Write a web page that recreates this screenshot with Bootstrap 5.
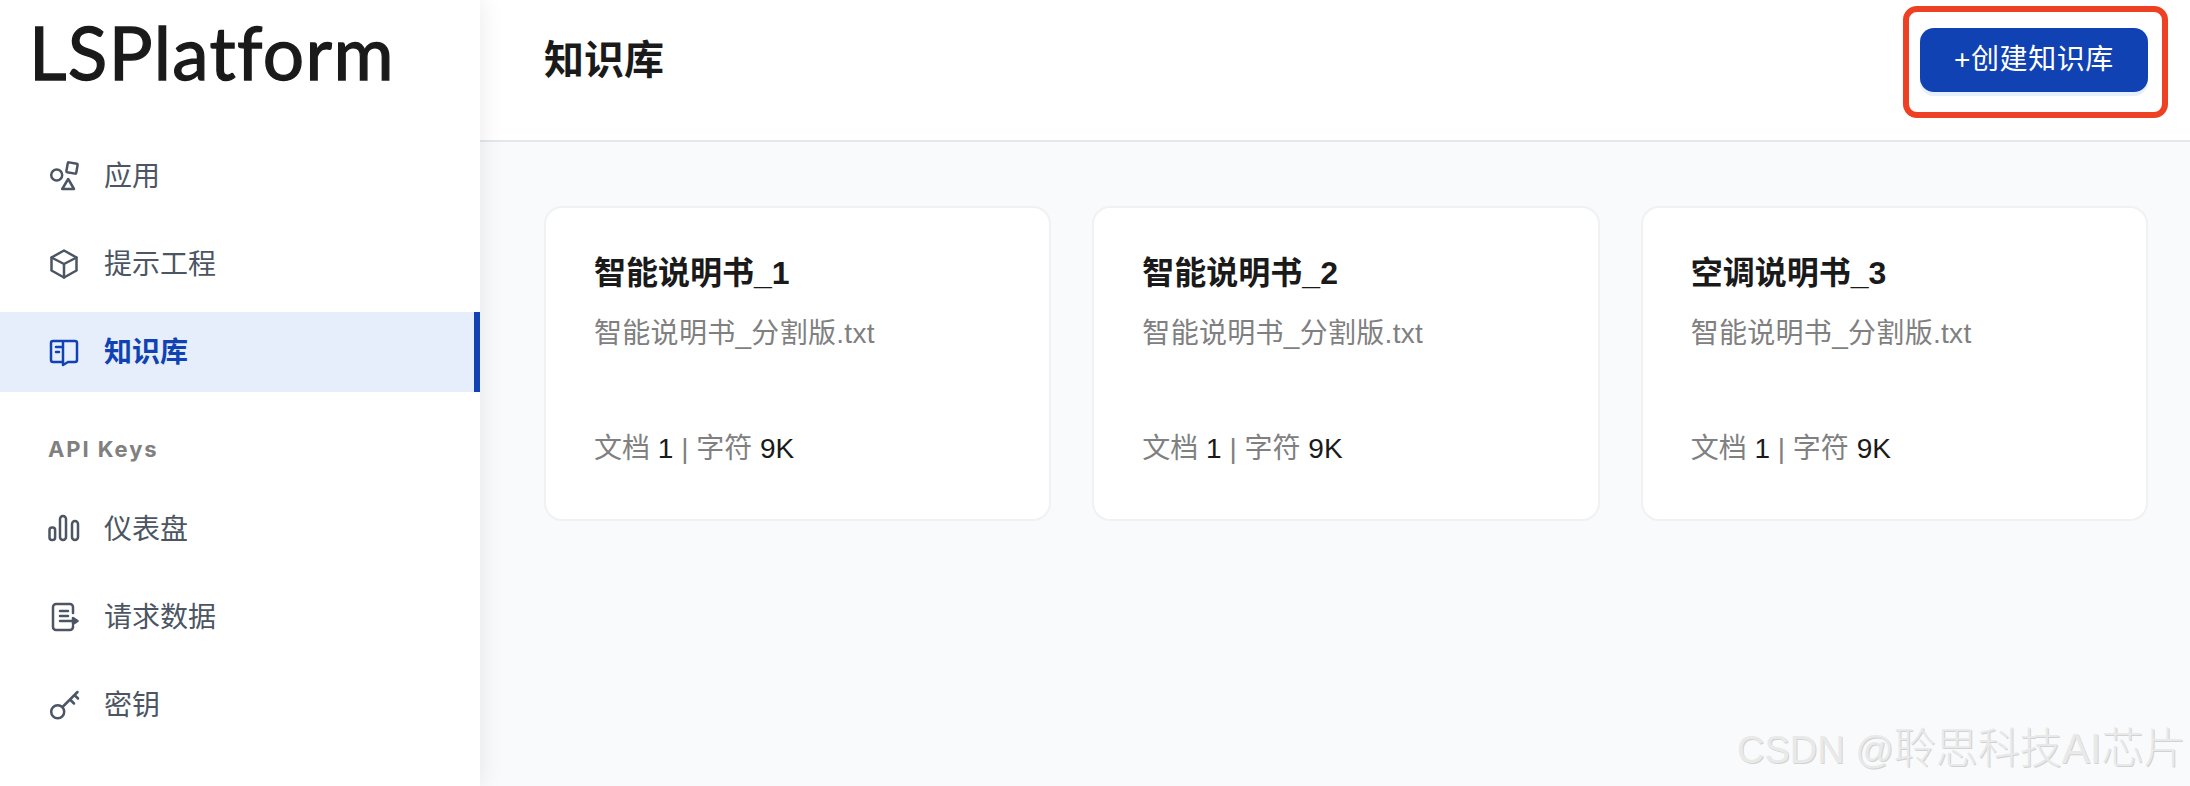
<!DOCTYPE html>
<html lang="zh-CN">
<head>
<meta charset="utf-8">
<title>知识库</title>
<link rel="stylesheet" href="https://cdn.jsdelivr.net/npm/bootstrap@5.3.0/dist/css/bootstrap.min.css">
<style>
html,body{height:100%;}
body{font-family:"Liberation Sans","Noto Sans CJK SC",sans-serif;background:#f9fafb;overflow:hidden;color:#1a1a1a;}
.shell{height:786px;position:relative;}
.side{width:480px;flex:none;background:#fff;box-shadow:0 0 24px rgba(0,0,0,.09);position:relative;z-index:2;}
.logo{height:136px;padding:0 0 24px 29px;font-family:Lato,sans-serif;font-size:73px;font-weight:400;line-height:104px;letter-spacing:1.35px;color:#1a1a1a;-webkit-text-stroke:1.3px #1a1a1a;}
.menu{gap:8px;}
.menu .nav-link{height:80px;padding:0 0 0 48px;gap:24px;font-size:28px;color:#4b5563;display:flex;align-items:center;}
.menu .nav-link span{padding-top:2px;}
.menu .nav-link svg{width:32px;height:32px;flex:none;fill:none;stroke:currentColor;stroke-width:2.5;stroke-linecap:round;stroke-linejoin:round;}
.menu .nav-link.active{background:#e6eefc;color:#1142b3;font-weight:700;border-right:6px solid #1142b3;}
.grp{height:48px;margin:33px 0 16px;padding-left:48px;font-family:Inter,sans-serif;font-size:22px;font-weight:700;letter-spacing:1.9px;color:#808080;display:flex;align-items:center;}
.mainpane{min-width:0;}
.topbar{height:142px;background:#fff;border-bottom:2px solid #e5e7eb;padding:0 42px 20px 64px;}
.topbar h1{font-size:40px;font-weight:700;margin:0;color:#1a1a1a;}
.btn-make{width:228px;height:64px;padding:0;background:#1142b3;border:0;border-radius:14px;color:#fff;font-size:28px;font-weight:400;letter-spacing:.6px;box-shadow:0 4px 0 #e6effc;}
.btn-make:hover{background:#1142b3;color:#fff;}
.cards{display:grid;grid-template-columns:repeat(3,1fr);gap:41px;padding:64px 42px 0 64px;}
.kb{height:315px;border:2px solid #f0f1f3;border-radius:18px;background:#fff;padding:41px 48px;}
.kb h5{font-size:32px;font-weight:700;line-height:48px;margin:0 0 15px;color:#1a1a1a;}
.kb .dsc{font-size:28px;line-height:44px;letter-spacing:.3px;color:#808080;}
.kb .meta{font-size:28px;line-height:44px;color:#808080;margin-top:71px;}
.kb .meta b{font-weight:400;color:#1a1a1a;}
.redmark{position:absolute;left:1903px;top:6px;width:265px;height:112px;border:6px solid #ee4023;border-radius:14px;z-index:3;pointer-events:none;}
.wmark{position:absolute;left:1737px;top:724px;font-family:"Liberation Sans","Noto Sans CJK SC",sans-serif;font-size:42px;font-weight:300;line-height:50px;color:#e9e9e9;text-shadow:1px 1px 0 #d2d2d2;white-space:nowrap;z-index:3;}
.wmark span{font-size:38px;}
</style>
</head>
<body>
<div class="shell d-flex">
  <aside class="side d-flex flex-column">
    <div class="logo">LSPlatform</div>
    <nav class="nav flex-column menu">
      <a class="nav-link" href="#"><svg viewBox="0 0 32 32"><circle cx="8.7" cy="15" r="5.5"/><rect x="19" y="3" width="10" height="10" rx="1" transform="rotate(10 24 8)"/><path d="M20.2 19L26 29H14.2Z"/></svg><span>应用</span></a>
      <a class="nav-link" href="#"><svg viewBox="0 0 32 32"><path d="M16 2.5L28.5 9.5V22.5L16 29.5L3.5 22.5V9.5Z"/><path d="M3.5 9.5L16 16L28.5 9.5M16 16V29.5"/></svg><span>提示工程</span></a>
      <a class="nav-link active" href="#"><svg viewBox="0 0 32 32"><path d="M15 5H5a2 2 0 0 0-2 2V24a2 2 0 0 0 2 2H15M15 5V29L20 26H27a2 2 0 0 0 2-2V7a2 2 0 0 0-2-2H15M8 11H13M8 16H11"/></svg><span>知识库</span></a>
    </nav>
    <div class="grp">API Keys</div>
    <nav class="nav flex-column menu">
      <a class="nav-link" href="#"><svg viewBox="0 0 32 32"><rect x="1.5" y="14.5" width="5.6" height="12.5" rx="2.5"/><rect x="12" y="3" width="6" height="24" rx="3"/><rect x="24" y="8" width="6" height="19" rx="3"/></svg><span>仪表盘</span></a>
      <a class="nav-link" href="#"><svg viewBox="0 0 32 32"><path d="M25 12V6a3 3 0 0 0-3-3H8a3 3 0 0 0-3 3V26a3 3 0 0 0 3 3H22a3 3 0 0 0 3-3V25M12 10H20M12 15H20M12 20H26"/><path d="M25 17L29.5 20L25 23Z" fill="currentColor"/></svg><span>请求数据</span></a>
      <a class="nav-link" href="#"><svg viewBox="0 0 32 32"><circle cx="9.7" cy="22.7" r="6.5"/><path d="M14.5 18L29.5 3M22 10.5L26 14.5M26.5 6L30 9.5"/></svg><span>密钥</span></a>
    </nav>
  </aside>
  <div class="mainpane flex-grow-1 d-flex flex-column">
    <header class="topbar d-flex align-items-center justify-content-between">
      <h1>知识库</h1>
      <button class="btn btn-make" type="button">+创建知识库</button>
    </header>
    <div class="cards">
      <div class="card kb"><h5>智能说明书_1</h5><div class="dsc">智能说明书_分割版.txt</div><div class="meta">文档 <b>1</b> | 字符 <b>9K</b></div></div>
      <div class="card kb"><h5>智能说明书_2</h5><div class="dsc">智能说明书_分割版.txt</div><div class="meta">文档 <b>1</b> | 字符 <b>9K</b></div></div>
      <div class="card kb"><h5>空调说明书_3</h5><div class="dsc">智能说明书_分割版.txt</div><div class="meta">文档 <b>1</b> | 字符 <b>9K</b></div></div>
    </div>
  </div>
  <div class="redmark"></div>
  <div class="wmark"><span>CSDN @</span>聆思科技AI芯片</div>
</div>
<script src="https://cdn.jsdelivr.net/npm/bootstrap@5.3.0/dist/js/bootstrap.bundle.min.js"></script>
</body>
</html>
